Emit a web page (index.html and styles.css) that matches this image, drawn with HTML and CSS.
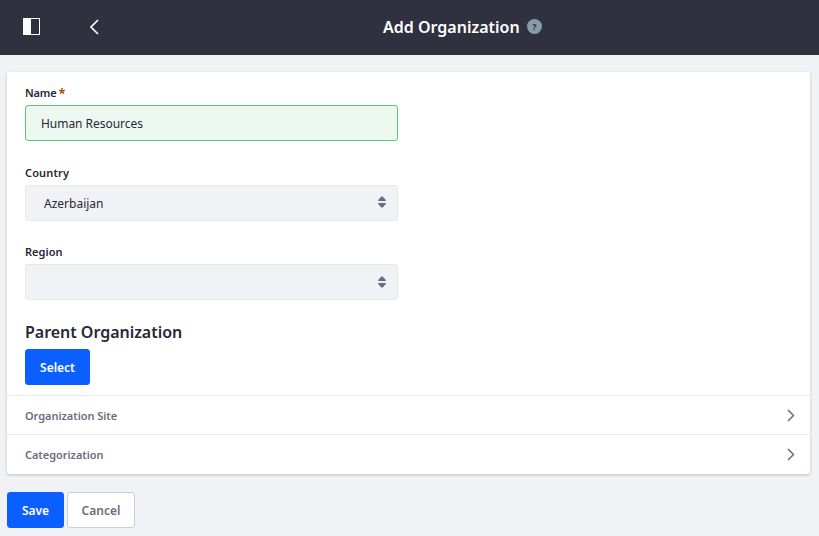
FILE: index.html
```html
<!DOCTYPE html>
<html lang="en">
<head>
<meta charset="utf-8">
<title>Add Organization</title>
<link rel="stylesheet" href="styles.css">
</head>
<body>
<header class="bar">
  <div class="bar-left">
    <svg class="panel-icon" width="17" height="17" viewBox="0 0 17 17"><rect x=".5" y=".5" width="16" height="16" fill="none" stroke="#fff"/><rect width="8" height="17" fill="#fff"/></svg>
    <svg class="back-icon" width="9" height="16" viewBox="0 0 9 16"><path d="M8 1 1 8 8 15" fill="none" stroke="#fff" stroke-width="1.6"/></svg>
  </div>
  <h1 class="title">Add Organization</h1>
  <span class="help">?</span>
</header>
<main class="content">
  <section class="sheet">
    <div class="form">
      <label class="label name">Name<svg class="required" width="6" height="6" viewBox="0 0 6 6"><path d="M3 0v3.2M.2 2.2 3 3.1l2.8-.9M1.2 5.6 3 3.1l1.8 2.5" fill="none" stroke="#b95000" stroke-width="1.5"/></svg></label>
      <div class="control valid">Human Resources</div>
      <label class="label country">Country</label>
      <div class="control select"><span>Azerbaijan</span><svg width="8" height="12" viewBox="0 0 8 12"><path d="M3.3.5h1.4L7.8 4v1H.2V4ZM.2 7h7.6v1L4.7 11.5H3.3L.2 8Z" fill="#6b6c7e"/></svg></div>
      <label class="label">Region</label>
      <div class="control select region"><span></span><svg width="8" height="12" viewBox="0 0 8 12"><path d="M3.3.5h1.4L7.8 4v1H.2V4ZM.2 7h7.6v1L4.7 11.5H3.3L.2 8Z" fill="#6b6c7e"/></svg></div>
      <h2 class="subtitle">Parent Organization</h2>
      <button class="btn primary">Select</button>
    </div>
    <div class="row"><span>Organization Site</span><svg width="8" height="14" viewBox="0 0 8 14"><path d="M1 2 6.5 7.5 1 13" fill="none" stroke="#6b6c7e" stroke-width="1.5"/></svg></div>
    <div class="row"><span>Categorization</span><svg width="8" height="14" viewBox="0 0 8 14"><path d="M1 2 6.5 7.5 1 13" fill="none" stroke="#6b6c7e" stroke-width="1.5"/></svg></div>
  </section>
  <div class="actions">
    <button class="btn primary">Save</button>
    <button class="btn secondary">Cancel</button>
  </div>
</main>
</body>
</html>
```
FILE: styles.css
```css
* { box-sizing: border-box; }
body { margin: 0; height: 536px; overflow: hidden; background: #f1f2f5; color: #272833; font-family: "Noto Sans", sans-serif; font-size: 12px; }
.bar { display: flex; align-items: center; height: 55px; padding-bottom: 2px; background: #30313f; color: #fff; }
.bar-left { display: flex; align-items: center; width: 383px; padding-left: 23px; }
.back-icon { margin: 1px 0 0 50px; }
.title { margin: 0; width: 137px; font-size: 16px; line-height: 24px; font-weight: 600; white-space: nowrap; }
.help { display: flex; align-items: center; justify-content: center; width: 15px; height: 15px; margin: -1px 0 0 7px; border-radius: 50%; background: #869cad; color: #30313f; font-size: 9px; font-weight: 700; }
.content { padding: 17px 9px 0 7px; }
.sheet { height: 402px; background: #fff; border-radius: 2px; box-shadow: 0 1px 3px rgba(39,40,51,.25); }
.form { height: 323px; padding: 12px 18px 0; }
.label { display: block; height: 21px; font-size: 11px; font-weight: 600; line-height: 18px; letter-spacing: .05px; }
.name { letter-spacing: -.15px; }
.country { letter-spacing: .15px; }
.required { margin-left: 2px; vertical-align: 3px; }
.control { display: flex; align-items: center; width: 373px; height: 36px; padding: 0 15px; border: 1px solid #e7e7ed; border-radius: 3px; background: #f1f2f5; }
.valid { margin-bottom: 23px; border-color: #5aca75; background: #edf8f0; letter-spacing: -.04px; }
.select { justify-content: space-between; margin-bottom: 22px; padding: 0 11.5px 0 18px; }
.select svg { margin-top: -2px; }
.region svg { margin-top: 0; }
.subtitle { margin: -1px 0 6px; font-size: 16px; line-height: 22px; font-weight: 600; letter-spacing: -.03px; }
.btn { height: 36px; padding: 0; border: 1px solid #0b5fff; border-radius: 3px; font-family: inherit; font-size: 12px; font-weight: 600; }
.primary { width: 65px; background: #0b5fff; color: #fff; }
.row { display: flex; align-items: center; justify-content: space-between; height: 39px; padding: 0 15px 0 18px; border-top: 1px solid #e7e7ed; color: #6b6c7e; font-size: 11px; font-weight: 600; letter-spacing: -.04px; }
.actions { display: flex; gap: 3px; margin-top: 18px; }
.actions .primary { width: 57px; }
.secondary { width: 68px; border-color: #cdced9; background: #fff; color: #6b6c7e; }
```
